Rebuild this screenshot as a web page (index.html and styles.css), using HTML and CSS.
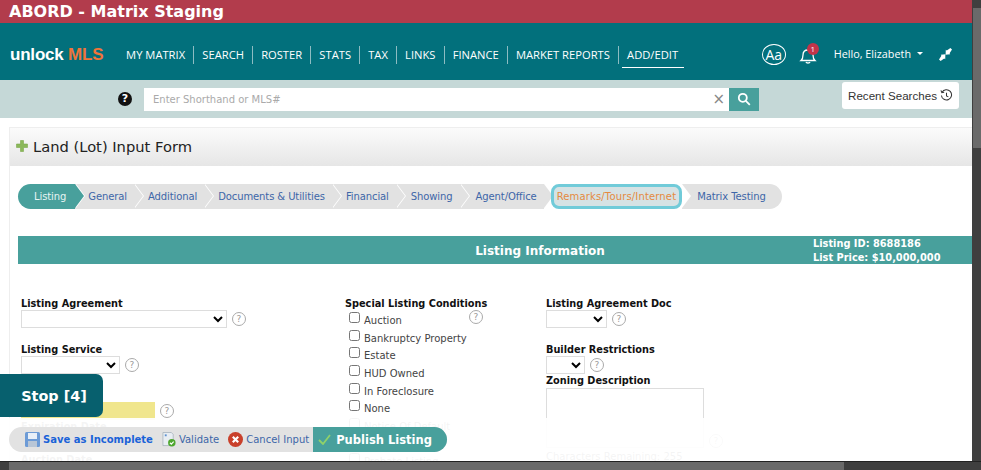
FILE: index.html
```html
<!doctype html>
<html lang="en">
<head>
    <meta charset="UTF-8">
    <title>Land (Lot) Input Form</title>
    <link rel="stylesheet" href="styles.css">
</head>
<body>
<div class="window">
    <div class="page">
        <div class="env-bar">ABORD - Matrix Staging</div>

        <div class="nav-bar">
            <div class="logo">unlock <span class="logo-mls">MLS</span></div>
            <ul class="nav-list">
                <li>MY MATRIX</li>
                <li>SEARCH</li>
                <li>ROSTER</li>
                <li>STATS</li>
                <li>TAX</li>
                <li>LINKS</li>
                <li>FINANCE</li>
                <li>MARKET REPORTS</li>
                <li class="active">ADD/EDIT</li>
            </ul>
            <div class="nav-right">
                <span class="font-btn">Aa</span>
                <span class="bell">
                    <svg width="18" height="20" viewBox="0 0 18 20" fill="none" stroke="#fff" stroke-width="1.3">
                        <path d="M2 15.500c1.600-1.400 2-3 2-5.500 0-3 2-5 5-5s5 2 5 5c0 2.500.4 4.100 2 5.500z"/>
                        <path d="M7 17c.4 1.300 3.600 1.300 4 0"/>
                    </svg>
                    <span class="bell-count">1</span>
                </span>
                <span class="hello">Hello, Elizabeth<i class="caret"></i></span>
                <svg class="collapse" width="13" height="13" viewBox="0 0 13 13" fill="#fff">
                    <path d="M6.800 1.800l1 .6L11.400 0 13 1.600l-2.400 3.600.6 1-4.600.6z"/>
                    <path d="M6.200 11.200l-1-.6L1.600 13 0 11.400l2.400-3.600-.6-1 4.600-.6z"/>
                </svg>
            </div>
        </div>

        <div class="search-bar">
            <span class="help-black">?</span>
            <div class="search-box">
                <span class="search-hint">Enter Shorthand or MLS#</span>
                <span class="search-clear">&times;</span>
            </div>
            <span class="search-btn">
                <svg width="14" height="14" viewBox="0 0 14 14" fill="none" stroke="#fff" stroke-width="1.800">
                    <circle cx="5.800" cy="5.800" r="4"/>
                    <path d="M8.800 8.800l4 4"/>
                </svg>
            </span>
            <span class="recent">Recent Searches
                <svg width="13" height="13" viewBox="0 0 14 14" fill="none" stroke="#333" stroke-width="1.100">
                    <path d="M2.200 3.500A5.500 5.500 0 1 1 1.500 7"/>
                    <path d="M1 1.500l1 2.500 2.500-.5"/>
                    <path d="M7 4v3.500l2 1"/>
                </svg>
            </span>
        </div>

        <div class="panel">
            <div class="panel-head">
                <svg width="12" height="12" viewBox="0 0 12 12"><path d="M4.500 .5h3v3.500h4v3.500h-4v4h-3v-4H.5V4h4z" fill="#8bb85a" stroke="#7aa84c" stroke-width=".6"/></svg>
                <h1>Land (Lot) Input Form</h1>
            </div>

            <div class="wizard">
                <span class="step current">Listing</span>
                <span class="step">General</span>
                <span class="step">Additional</span>
                <span class="step">Documents &amp; Utilities</span>
                <span class="step">Financial</span>
                <span class="step step-show">Showing</span>
                <span class="step step-agent">Agent/Office</span>
                <span class="step focus">Remarks/Tours/Internet</span>
                <span class="step last">Matrix Testing</span>
            </div>

            <div class="band">
                <span class="band-title">Listing Information</span>
                <span class="band-info">Listing ID: 8688186<br>List Price: $10,000,000</span>
            </div>

            <div class="form-cols">
                <div class="col col-1">
                    <label class="field-label">Listing Agreement</label>
                    <div class="field-row">
                        <select class="sel sel-wide"></select><span class="help">?</span>
                    </div>
                    <label class="field-label gap-top">Listing Service</label>
                    <div class="field-row">
                        <select class="sel sel-mid"></select><span class="help">?</span>
                    </div>
                    <div class="label-spacer"></div>
                    <div class="field-row">
                        <input class="date-input" type="text"><span class="help">?</span>
                    </div>
                    <label class="field-label faint">Expiration Date</label>
                    <label class="field-label faint gap-low">Auction Date</label>
                </div>
                <div class="col col-2">
                    <label class="field-label">Special Listing Conditions</label>
                    <span class="help help-float">?</span>
                    <ul class="check-list">
                        <li><input type="checkbox">Auction</li>
                        <li><input type="checkbox">Bankruptcy Property</li>
                        <li><input type="checkbox">Estate</li>
                        <li><input type="checkbox">HUD Owned</li>
                        <li><input type="checkbox">In Foreclosure</li>
                        <li><input type="checkbox">None</li>
                        <li class="faint"><input type="checkbox">Notice Of Default</li>
                        <li class="faint skip-row"><input type="checkbox">Probate Listing</li>
                    </ul>
                </div>
                <div class="col col-3">
                    <label class="field-label">Listing Agreement Doc</label>
                    <div class="field-row">
                        <select class="sel sel-doc"></select><span class="help">?</span>
                    </div>
                    <label class="field-label gap-top">Builder Restrictions</label>
                    <div class="field-row">
                        <select class="sel sel-small"></select><span class="help">?</span>
                    </div>
                    <label class="field-label">Zoning Description</label>
                    <div class="field-row zoning-row">
                        <textarea class="zoning"></textarea><span class="help">?</span>
                    </div>
                    <div class="faint remaining">Characters Remaining: 255</div>
                </div>
            </div>
        </div>
    </div>
    <div class="scroll-v"><span class="thumb-v"></span></div>
</div>
<div class="scroll-h"><span class="thumb-h"></span></div>

<!-- floats over the form -->
<button class="stop-btn">Stop [4]</button>
<div class="fade"></div>
<div class="action-bar">
    <span class="action save">
        <svg width="15" height="15" viewBox="0 0 15 15">
            <rect width="15" height="15" rx="1.500" fill="#6d9bd6"/>
            <rect x="3" y="1" width="9" height="6" fill="#e8eff8"/>
            <rect x="3" y="9" width="9" height="6" fill="#b9c6d6"/>
        </svg>
        Save as Incomplete
    </span>
    <span class="action">
        <svg width="14" height="15" viewBox="0 0 15 15">
            <path d="M1 0h9l2 2v12H1z" fill="#e8edf2" stroke="#9aa7b3" stroke-width=".7"/>
            <rect x="3" y="2" width="2" height="2" fill="#5b8fd0"/>
            <circle cx="10.500" cy="11" r="4" fill="#4ea72e"/>
            <path d="M8.500 11l1.500 1.500 2.500-2.800" fill="none" stroke="#fff" stroke-width="1.200"/>
        </svg>
        Validate
    </span>
    <span class="action">
        <svg width="15" height="15" viewBox="0 0 15 15">
            <circle cx="7.500" cy="7.500" r="7.500" fill="#c9402b"/>
            <path d="M4.800 4.800l5.400 5.400m0-5.400l-5.400 5.400" stroke="#fff" stroke-width="2.200"/>
        </svg>
        Cancel Input
    </span>
    <span class="publish">
        <svg width="13" height="11" viewBox="0 0 13 11" fill="none" stroke="#8fd16a" stroke-width="1.800"><path d="M1 6l4 4 7-9"/></svg>
        Publish Listing
    </span>
</div>
</body>
</html>
```

FILE: styles.css
```css
/*reset*/
body, h1, ul, li {
    margin: 0;
    padding: 0;
}
ul { list-style: none; }
/*/reset*/

html, body {
    height: 100%;
    overflow: hidden;
}
body {
    position: relative;
    display: flex;
    flex-direction: column;
    background-color: #fff;
    font-family: "DejaVu Sans", Verdana, sans-serif;
    font-size: 10px;
    color: #222;
}
.window {
    flex: 1;
    min-height: 0;
    display: flex;
    overflow: hidden;
}
.page {
    flex: 1;
    min-width: 0;
}

/* scrollbars */
.scroll-v {
    width: 9px;
    background-color: #3f3f3f;
}
.thumb-v {
    display: block;
    width: 8px;
    height: 140px;
    margin: 8px 0 0 1px;
    background-color: #6a6a6a;
}
.scroll-h {
    height: 9px;
    background-color: #3f3f3f;
    border-top: 1px solid #222;
    box-sizing: border-box;
}
.thumb-h {
    display: block;
    width: 835px;
    height: 8px;
    margin-left: 9px;
    background-color: #6a6a6a;
}

/* top bars */
.env-bar {
    height: 23px;
    padding-left: 9px;
    background-color: #b23c4c;
    color: #fff;
    font-size: 16px;
    font-weight: bold;
    line-height: 23px;
}
.nav-bar {
    height: 57px;
    padding-top: 6px;
    display: flex;
    align-items: center;
    background-color: #02707c;
    color: #fff;
    box-sizing: border-box;
}
.logo {
    width: 118px;
    padding-left: 10px;
    font-family: "Liberation Sans", Arial, sans-serif;
    font-size: 17px;
    font-weight: bold;
    letter-spacing: -.2px;
    box-sizing: border-box;
}
.logo-mls { color: #f0743a; font-size: 17px; }
.nav-list {
    display: flex;
    font-family: "Open Sans", sans-serif;
    font-size: 11.2px;
}
.nav-list li {
    padding: 0 8.100px;
    height: 18px;
    line-height: 18px;
    border-right: 1px solid #8dbcc2;
    white-space: nowrap;
}
.nav-list li.active {
    position: relative;
    border-right: none;
    padding: 0 5px 0 8.100px;
}
.nav-list li.active:after {
    content: "";
    position: absolute;
    left: 3px;
    right: -1px;
    top: 21px;
    height: 1px;
    background-color: #fff;
}
.nav-right {
    margin-left: auto;
    display: flex;
    align-items: center;
    font-family: "Open Sans", sans-serif;
    font-size: 10.800px;
    padding-right: 20px;
}
.font-btn {
    width: 22px;
    height: 19px;
    border: 1px solid #fff;
    border-radius: 50%;
    text-align: center;
    line-height: 19px;
    font-size: 14px;
}
.bell {
    position: relative;
    display: block;
    height: 20px;
    margin: 0 17px 0 13px;
}
.bell-count {
    position: absolute;
    left: 8px;
    top: -2px;
    width: 12px;
    height: 12px;
    border-radius: 50%;
    background-color: #c2344a;
    font-size: 8px;
    line-height: 12px;
    text-align: center;
}
.hello { display: flex; align-items: center; margin-top: -2px; }
.caret {
    width: 0;
    height: 0;
    margin-left: 6px;
    border: 3.500px solid transparent;
    border-top-color: #fff;
    border-bottom: none;
}
.collapse { margin-left: 16px; }

.search-bar {
    height: 38px;
    display: flex;
    align-items: center;
    padding-left: 118px;
    background-color: #c5d8d7;
    box-sizing: border-box;
}
.help-black {
    width: 14px;
    height: 14px;
    border-radius: 50%;
    background-color: #111;
    color: #fff;
    font-size: 11px;
    font-weight: bold;
    line-height: 14px;
    text-align: center;
}
.search-box {
    width: 585px;
    height: 23px;
    margin-left: 12px;
    padding: 0 4px 0 9px;
    display: flex;
    justify-content: space-between;
    align-items: center;
    background-color: #fff;
    box-sizing: border-box;
}
.search-hint { color: #aaa; font-size: 10px; }
.search-clear { color: #888; font-size: 15px; }
.search-btn {
    width: 30px;
    height: 23px;
    display: flex;
    align-items: center;
    justify-content: center;
    background-color: #48a09c;
}
.recent {
    width: 117px;
    height: 27px;
    margin: -8px 0 0 83px;
    display: flex;
    align-items: center;
    justify-content: center;
    gap: 3px;
    background-color: #fff;
    border-radius: 3px;
    font-family: "Liberation Sans", Arial, sans-serif;
    font-size: 11.6px;
    color: #333;
}

/* form panel */
.panel {
    margin: 9px 0 0 9px;
    border-left: 1px solid #eee;
    border-top: 1px solid #eee;
}
.panel-head {
    height: 38px;
    display: flex;
    align-items: center;
    gap: 5px;
    padding: 0 0 2px 6px;
    background: linear-gradient(#fbfbfb, #e6e6e6);
    box-sizing: border-box;
}
.panel-head h1 {
    font-size: 14.7px;
    font-weight: normal;
    color: #222;
}

/* wizard steps */
.wizard {
    display: flex;
    margin: 18px 0 0 8px;
    height: 25px;
    font-size: 10px;
    letter-spacing: -.1px;
    line-height: 25px;
    color: #3d66a8;
}
.step {
    position: relative;
    padding: 0 7px 0 14px;
    background-color: #e2e2e2;
    white-space: nowrap;
}
.step:after {
    content: "";
    position: absolute;
    z-index: 1;
    top: 0;
    right: -9px;
    width: 0;
    height: 0;
    border-style: solid;
    border-width: 12.500px 0 12.500px 9px;
    border-color: transparent transparent transparent #e2e2e2;
    filter: drop-shadow(1px 0 0 #fff);
}
.step.current {
    padding: 0 9px 0 16px;
    border-radius: 13px 0 0 13px;
    background-color: #48a09c;
    color: #e6f4f3;
}
.step.current + .step { padding-left: 13px; }
.step.current:after { border-left-color: #48a09c; }
.step-show { padding-left: 15px; }
.step-agent { padding-left: 16px; }
.step.focus {
    z-index: 2;
    margin-left: 7px;
    padding: 0 3px;
    line-height: 19px;
    letter-spacing: .15px;
    border: 3px solid #71cbd9;
    border-radius: 8px;
    background-color: #d6e2e4;
    color: #e58a3f;
}
.step.focus:after { display: none; }
.step.last {
    padding: 0 16px 0 15px;
    border-radius: 0 13px 13px 0;
}
.step.last:after { display: none; }
.step.last:before {
    content: "";
    position: absolute;
    top: 0;
    left: 0;
    border-style: solid;
    border-width: 12.500px 0 12.500px 9px;
    border-color: transparent transparent transparent #fff;
}

/* section band */
.band {
    position: relative;
    height: 28px;
    margin: 27px 0 0 8px;
    padding-left: 90px;
    background-color: #48a09c;
    color: #fff;
    font-weight: bold;
    text-align: center;
    box-sizing: border-box;
}
.band-title {
    font-size: 12px;
    line-height: 30px;
}
.band-info {
    position: absolute;
    left: 795px;
    top: 1px;
    font-size: 9.800px;
    line-height: 14px;
    text-align: left;
    white-space: nowrap;
}

/* form columns */
.form-cols {
    display: flex;
    padding: 33px 0 0 11px;
}
.col-1 { width: 324px; }
.col-2 { width: 201px; position: relative; }
.col-3 { width: 200px; }
.field-label {
    display: block;
    height: 13px;
    font-size: 9.750px;
    font-weight: bold;
    line-height: 13px;
    color: #111;
    white-space: nowrap;
}
.label-spacer { height: 28px; }
.gap-top { margin-top: 15px; }
.gap-low { margin-top: 20px; }
.field-row {
    display: flex;
    align-items: center;
    gap: 5px;
}
.sel {
    height: 18px;
    padding: 0;
    background-color: #fff;
    border: 1px solid #ddd;
    box-sizing: border-box;
    font-size: 10px;
}
.sel-wide { width: 206px; }
.sel-mid { width: 99px; }
.sel-doc { width: 61px; }
.sel-small { width: 39px; }
.help {
    width: 12px;
    height: 12px;
    border: 1px solid #aaa;
    border-radius: 50%;
    color: #999;
    font-size: 9px;
    line-height: 12px;
    text-align: center;
    flex: none;
}
.help-float {
    position: absolute;
    left: 124px;
    top: 13px;
}
.date-input {
    width: 134px;
    height: 18px;
    padding: 0;
    border: none;
    background-color: #f0e68c;
    box-sizing: border-box;
}
.check-list {
    margin: 2px 0 0 4px;
    font-size: 10px;
    color: #444;
}
.check-list li {
    height: 17.600px;
    display: flex;
    align-items: center;
    gap: 4px;
    line-height: 17px;
}
.check-list li.skip-row { margin-top: 17.600px; }
.check-list input {
    width: 11px;
    height: 11px;
    margin: 0 0 6px 0;
}
.zoning-row { align-items: flex-end; }
.zoning {
    display: block;
    width: 158px;
    height: 60px;
    padding: 0;
    margin-top: 1px;
    border: 1px solid #ddd;
    box-sizing: border-box;
    resize: none;
}
.remaining { margin-top: 3px; white-space: nowrap; }
.faint { color: #666; }

/* floats */
.stop-btn {
    position: absolute;
    left: 0;
    top: 374px;
    width: 103px;
    height: 43px;
    padding: 0 0 0 5px;
    border: none;
    border-radius: 0 7px 7px 0;
    background-color: #07606e;
    color: #fff;
    font-family: "DejaVu Sans", Verdana, sans-serif;
    font-size: 14.400px;
    font-weight: bold;
}
.fade {
    position: absolute;
    left: 0;
    right: 9px;
    top: 418px;
    height: 43px;
    background-color: rgba(255,255,255,.93);
}
.action-bar {
    position: absolute;
    left: 9px;
    top: 427px;
    height: 25px;
    display: flex;
    align-items: center;
    padding-left: 16px;
    border-radius: 13px;
    background-color: #e2e2e2;
    font-size: 10px;
    color: #3d66a8;
}
.action {
    display: flex;
    align-items: center;
    gap: 3px;
    margin-right: 9px;
}
.action.save {
    margin-right: 9px;
    color: #1a62d8;
    font-weight: bold;
}
.publish {
    display: flex;
    align-items: center;
    gap: 5px;
    height: 25px;
    padding: 0 15px 0 5px;
    margin-left: -5px;
    border-radius: 0 13px 13px 0;
    background-color: #48a09c;
    color: #fff;
    font-size: 11.500px;
    font-weight: bold;
}
```
